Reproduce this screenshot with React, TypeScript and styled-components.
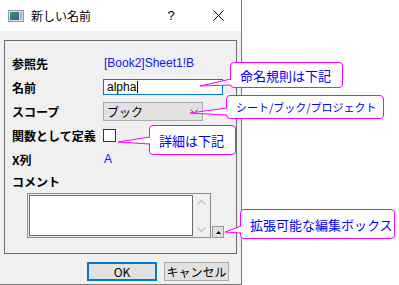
import styled, { createGlobalStyle } from 'styled-components'

const GlobalStyle = createGlobalStyle`
  html, body {
    margin: 0;
    padding: 0;
    background: #ffffff;
  }
  body {
    font-family: "Liberation Sans", "Noto Sans CJK JP", sans-serif;
    font-size: 12px;
  }
`

const Page = styled.div`
  position: relative;
  width: 399px;
  height: 285px;
  overflow: hidden;
`

const Dialog = styled.div`
  width: 241px;
  height: 284px;
  border-right: 1px solid #7a7a7a;
  border-bottom: 1px solid #7a7a7a;
  display: flex;
  flex-direction: column;
  background: #f0f0f0;
`

const TitleBar = styled.div`
  height: 31px;
  background: #ffffff;
  display: flex;
  align-items: center;
  padding-left: 8px;
  flex-shrink: 0;
`

const Title = styled.span`
  margin-left: 7px;
  font-family: "Noto Sans CJK JP", sans-serif;
  font-size: 12px;
  color: #000;
  flex: 1;
`

const TitleButton = styled.span<{ w: number }>`
  width: ${({ w }) => w}px;
  display: flex;
  justify-content: center;
  align-items: center;
  font-size: 13px;
  color: #000;
`

const GroupBox = styled.div`
  margin: 9px 4px 0 4px;
  height: 214px;
  border: 1px solid #6b6b6b;
  padding: 10px 0 0 7px;
  box-sizing: border-box;
`

const Form = styled.div`
  display: grid;
  grid-template-columns: 91px 1fr;
  grid-template-rows: 24px 24px 24px 24px 24px 20px;
  align-items: center;
`

const Label = styled.span`
  font-family: "Noto Sans CJK JP", sans-serif;
  font-weight: 700;
  font-size: 12px;
  color: #000;
  white-space: nowrap;
`

const Value = styled.span`
  font-family: "Liberation Sans", "Noto Sans CJK JP", sans-serif;
  font-size: 12px;
  color: #1515f0;
  padding-left: 1px;
`

const TextInput = styled.div`
  width: 120px;
  height: 16px;
  box-sizing: border-box;
  border: 1px solid #0078d7;
  background: #fff;
  font-size: 12px;
  line-height: 14px;
  padding-left: 3px;
  color: #000;
`

const Caret = styled.span`
  display: inline-block;
  width: 1px;
  height: 12px;
  background: #000;
  vertical-align: -2px;
  margin-left: 1px;
`

const Select = styled.div`
  width: 100px;
  height: 19px;
  box-sizing: border-box;
  border: 1px solid #adadad;
  background: #e1e1e1;
  display: flex;
  align-items: center;
  justify-content: space-between;
  padding: 0 4px 0 3px;
  font-family: "Noto Sans CJK JP", sans-serif;
  font-size: 12px;
  color: #000;
`

const CheckBox = styled.div`
  width: 13px;
  height: 13px;
  box-sizing: border-box;
  border: 1px solid #333;
  background: #fff;
`

const CommentRow = styled.div`
  display: flex;
  align-items: flex-end;
  margin: 2px 0 0 15px;
`

const CommentFrame = styled.div`
  width: 184px;
  height: 45px;
  box-sizing: border-box;
  border: 1px solid #8a8a8a;
  padding: 1px;
  display: flex;
  background: #f0f0f0;
`

const CommentText = styled.div`
  flex: 1;
  border: 1px solid #6b6b6b;
  background: #fff;
`

const ScrollColumn = styled.div`
  width: 16px;
  display: flex;
  flex-direction: column;
  justify-content: space-between;
  align-items: center;
  padding: 5px 0 4px;
`

const ExpandButton = styled.div`
  width: 12px;
  height: 12px;
  box-sizing: border-box;
  margin-left: 1px;
  border: 1px solid #9a9a9a;
  background: #e1e1e1;
  display: flex;
  align-items: center;
  justify-content: center;
`

const Footer = styled.div`
  display: flex;
  padding: 8px 0 0 87px;
  gap: 7px;
`

const Button = styled.div<{ primary?: boolean; w: number }>`
  width: ${({ w }) => w}px;
  height: 19px;
  box-sizing: border-box;
  border: ${({ primary }) => (primary ? '2px solid #0078d7' : '1px solid #adadad')};
  background: #e1e1e1;
  display: flex;
  align-items: center;
  justify-content: center;
  font-family: "Noto Sans CJK JP", sans-serif;
  font-size: 12px;
  color: #000;
`

const CalloutBox = styled.div<{ x: number; y: number; w: number; h: number; size: number }>`
  position: absolute;
  left: ${({ x }) => x}px;
  top: ${({ y }) => y}px;
  width: ${({ w }) => w}px;
  height: ${({ h }) => h}px;
  box-sizing: border-box;
  border: 1px solid #ff00ff;
  border-radius: 4px;
  background: #fff;
  display: flex;
  align-items: center;
  padding-left: 9px;
  font-family: "Noto Sans CJK JP", sans-serif;
  font-size: ${({ size }) => size}px;
  color: #0000ff;
  white-space: nowrap;
`

const Tail = styled.svg`
  position: absolute;
  overflow: visible;
  left: 0;
  top: 0;
`

type CalloutProps = {
  x: number
  y: number
  w: number
  h: number
  size?: number
  tip: [number, number]
  base: [number, number]
  text: string
}

// tip and base are in page coords; base = y range on the left edge of the box
const Callout = ({ x, y, w, h, size = 13, tip, base, text }: CalloutProps) => {
  const tx = tip[0] - x - 1
  const ty = tip[1] - y - 1
  const b1 = base[0] - y - 1
  const b2 = base[1] - y - 1
  return (
    <CalloutBox x={x} y={y} w={w} h={h} size={size}>
      {text}
      <Tail width='1' height='1'>
        <polygon points={`${tx},${ty} 1,${b1} 1,${b2}`} fill='#fff' />
        <polyline points={`0,${b1} ${tx},${ty} 0,${b2}`} fill='none' stroke='#ff00ff' strokeWidth='1' />
      </Tail>
    </CalloutBox>
  )
}

const AppIcon = () => (
  <svg width='16' height='12' viewBox='0 0 16 12'>
    <defs>
      <linearGradient id='g' x1='0' y1='0' x2='1' y2='1'>
        <stop offset='0' stopColor='#3a9a6a' />
        <stop offset='1' stopColor='#2a5aa8' />
      </linearGradient>
    </defs>
    <rect x='0.5' y='0.5' width='15' height='11' fill='#dfe6ee' stroke='#8a9aa8' />
    <rect x='2' y='2' width='9' height='8' fill='url(#g)' />
    <rect x='12' y='2' width='2' height='8' fill='#9bb0c4' />
  </svg>
)

const App = () => {
  return (
    <Page>
      <GlobalStyle />
      <Dialog>
        <TitleBar>
          <AppIcon />
          <Title>新しい名前</Title>
          <TitleButton w={48}>?</TitleButton>
          <TitleButton w={46}>
            <svg width='11' height='11' viewBox='0 0 11 11'>
              <path d='M0.5 0.5 L10.5 10.5 M10.5 0.5 L0.5 10.5' stroke='#000' strokeWidth='1' />
            </svg>
          </TitleButton>
        </TitleBar>
        <GroupBox>
          <Form>
            <Label>参照先</Label>
            <Value>[Book2]Sheet1!B</Value>
            <Label>名前</Label>
            <TextInput>alpha<Caret /></TextInput>
            <Label>スコープ</Label>
            <Select>
              <span>ブック</span>
              <svg width='8' height='5' viewBox='0 0 8 5'>
                <path d='M0.5 0.5 L4 4 L7.5 0.5' stroke='#555' fill='none' />
              </svg>
            </Select>
            <Label>関数として定義</Label>
            <CheckBox />
            <Label>X列</Label>
            <Value>A</Value>
            <Label>コメント</Label>
            <span />
          </Form>
          <CommentRow>
            <CommentFrame>
              <CommentText />
              <ScrollColumn>
                <svg width='9' height='5' viewBox='0 0 9 5'>
                  <path d='M0.5 4.5 L4.5 0.5 L8.5 4.5' stroke='#c4c4c4' fill='none' strokeWidth='1.2' />
                </svg>
                <svg width='9' height='5' viewBox='0 0 9 5'>
                  <path d='M0.5 0.5 L4.5 4.5 L8.5 0.5' stroke='#c4c4c4' fill='none' strokeWidth='1.2' />
                </svg>
              </ScrollColumn>
            </CommentFrame>
            <ExpandButton>
              <svg width='5' height='3' viewBox='0 0 5 3'>
                <path d='M0 3 L2.5 0 L5 3 Z' fill='#000' />
              </svg>
            </ExpandButton>
          </CommentRow>
        </GroupBox>
        <Footer>
          <Button primary w={70}>OK</Button>
          <Button w={65}>キャンセル</Button>
        </Footer>
      </Dialog>
      <Callout x={230} y={62} w={113} h={26} tip={[200, 86]} base={[79, 85]} text='命名規則は下記' />
      <Callout x={226} y={95} w={158} h={24} size={11} tip={[190, 113]} base={[108, 115]} text='シート/ブック/プロジェクト' />
      <Callout x={149} y={125} w={87} h={30} tip={[118, 142]} base={[137, 144]} text='詳細は下記' />
      <Callout x={240} y={209} w={155} h={30} tip={[225, 232]} base={[226, 233]} text='拡張可能な編集ボックス' />
    </Page>
  )
}

export default App
